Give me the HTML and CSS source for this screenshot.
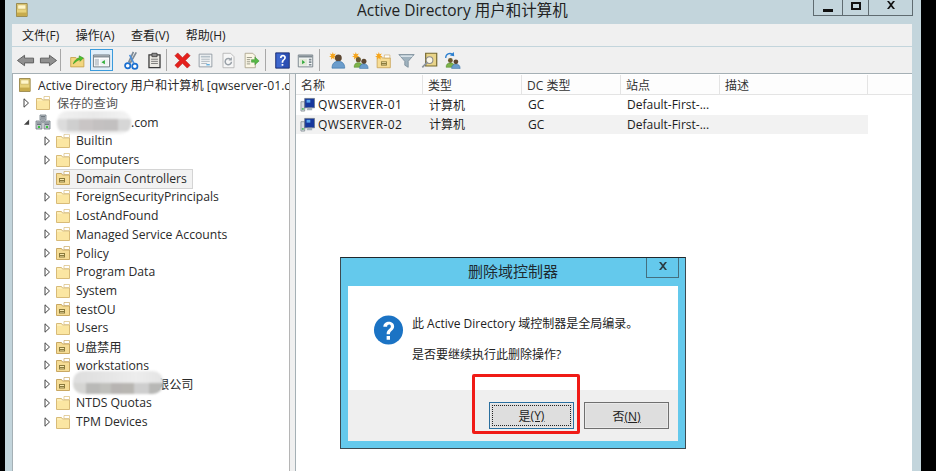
FILE: index.html
```html
<!DOCTYPE html>
<html lang="zh-CN">
<head>
<meta charset="utf-8">
<title>Active Directory 用户和计算机</title>
<link rel="stylesheet" href="styles.css">
</head>
<body>
<svg class="defs" aria-hidden="true">
  <symbol id="folder" viewBox="0 0 16 16">
    <path d="M1.5 3.5h5l1 1.5h7v9.5h-13z" fill="#fdeeb8" stroke="#d8bb78"/>
    <path d="M2 6h12v8H2z" fill="#fbe6a2"/>
    <path d="M9 1.5h5.5v3H9z" fill="#fff" stroke="#d8bb78" stroke-width=".7"/>
  </symbol>
  <symbol id="ou" viewBox="0 0 16 16">
    <path d="M1.5 3.5h5l1 1.5h7v9.5h-13z" fill="#f5dc95" stroke="#c9a862"/>
    <path d="M9 1.5h5.5v3H9z" fill="#fff" stroke="#c9a862" stroke-width=".7"/>
    <path d="M4 8h6v4.500H4z" fill="#8a7a3c"/>
    <path d="M5 9h4v1H5zM5 11h4v.6H5z" fill="#f7e7b0"/>
  </symbol>
  <symbol id="root" viewBox="0 0 14 16">
    <path d="M.5.500h12.500v15H.500z" fill="#e8d27a" stroke="#8c7a3a"/>
    <path d="M2 2h9.500v5H2z" fill="#fff6c8" stroke="#b8a050" stroke-width=".6"/>
    <path d="M1 11h12v4H1z" fill="#c7ab4c"/>
  </symbol>
  <symbol id="domain" viewBox="0 0 16 16">
    <path d="M5 1h6v5H5zM1 7h6v8H1zM9 7h6v8H9z" fill="#c0c6cc" stroke="#6f7980" stroke-width=".8"/>
    <path d="M6 2.500h4M6 4h4M2 9h4M2 10.500h4M10 9h4M10 10.500h4" stroke="#59636b" stroke-width=".8"/>
    <path d="M3 12h2v2H3zM11 12h2v2h-2z" fill="#39c23c"/>
    <path d="M7.500 6h1v3h-1z" fill="#6f7980"/>
  </symbol>
  <symbol id="computer" viewBox="0 0 16 16">
    <path d="M1 5h4v10H1z" fill="#d5dbe0" stroke="#7f8a8f" stroke-width=".8"/>
    <path d="M2 12h2v1.500H2z" fill="#3ab54a"/>
    <path d="M5 1.500h10.500v10H5z" fill="#16379c" stroke="#6d7a88" stroke-width=".8"/>
    <path d="M7 3h4v3H7z" fill="#59a7ee"/>
    <path d="M8 11.500h5V14H7z" fill="#a8b2bb"/>
  </symbol>
  <symbol id="x" viewBox="0 0 10 8"><path d="M1 0h2l2 2.500L7 0h2L6 4l3 4H7L5 5.500 3 8H1l3-4z"/></symbol>
  <symbol id="tri" viewBox="0 0 6 10"><path d="M.5.800 5 5 .5 9.200z" fill="#fff" stroke="#444"/></symbol>
  <symbol id="tri-open" viewBox="0 0 8 8"><path d="M7 1v6H1z" fill="#444"/></symbol>

  <symbol id="i-back" viewBox="0 0 20 20"><path d="M1.500 10 9 4.500V7.500h9.500v5H9v3z" fill="#909090" stroke="#5e5e5e"/></symbol>
  <symbol id="i-fwd" viewBox="0 0 20 20"><path d="M18.500 10 11 4.500V7.500H1.500v5H11v3z" fill="#909090" stroke="#5e5e5e"/></symbol>
  <symbol id="i-up" viewBox="0 0 20 20">
    <path d="M2 6.500h6l1 1h8.500v10H2z" fill="#f3d67f" stroke="#c5a04c"/>
    <path d="M5 14c1-4 4-6 7-7V4.500L17 7l-4 4V9c-3 .500-5 2.500-8 5z" fill="#4ec12f" stroke="#2e8a1c" stroke-width=".6"/>
  </symbol>
  <symbol id="i-tree" viewBox="0 0 20 20">
    <path d="M.5 3.500h19v14H.5z" fill="#fff" stroke="#5c6870"/>
    <path d="M1 4h18v2.500H1z" fill="#8a949c"/>
    <path d="M2 8h5v8H2z" fill="#c7ced4"/>
    <path d="M8.500 8h9.500v8H8.500z" fill="#eef1f3"/>
    <path d="M14 9.500v5l-4-2.500z" fill="#2fae3a"/>
  </symbol>
  <symbol id="i-cut" viewBox="0 0 20 20">
    <path d="M12 1 7 12M15 1.500 8.500 13" stroke="#7d8a96" stroke-width="1.800" fill="none"/>
    <circle cx="6" cy="15.500" r="2.800" fill="#fff" stroke="#1a6fd0" stroke-width="1.800"/>
    <circle cx="13.500" cy="16" r="2.800" fill="#fff" stroke="#1a6fd0" stroke-width="1.800"/>
    <path d="M8 4 12.500 13" stroke="#4a8fdc" stroke-width="1.600"/>
  </symbol>
  <symbol id="i-paste" viewBox="0 0 20 20">
    <path d="M3.500 3.500h13v15h-13z" fill="#eceae4" stroke="#3a3a3a" stroke-width="1.500"/>
    <path d="M7 1.500h6v4H7z" fill="#8c8c8c" stroke="#3a3a3a"/>
    <path d="M6 8.500h8M6 11h8M6 13.500h8" stroke="#6a6a6a"/>
  </symbol>
  <symbol id="i-del" viewBox="0 0 20 20"><path d="M2 5 5 2l5 5 5-5 3 3-5 5 5 5-3 3-5-5-5 5-3-3 5-5z" fill="#e5201c" stroke="#b31512" stroke-width=".6"/></symbol>
  <symbol id="i-props" viewBox="0 0 20 20">
    <path d="M2.500 2.500h15v15h-15z" fill="#f2f4f5" stroke="#8a949c"/>
    <path d="M4.500 4.500h11v2h-11z" fill="#b5c0c8"/>
    <path d="M5 8.500h10M5 11h10M5 13.500h7" stroke="#a5b0b8"/>
    <path d="M11 15h4" stroke="#55a9dd" stroke-width="1.500"/>
  </symbol>
  <symbol id="i-refresh" viewBox="0 0 20 20">
    <path d="M3.500 1.500h9l4 4v13h-13z" fill="#f6f6f6" stroke="#b4b4b4"/>
    <path d="M13.500 11.500a3.700 3.700 0 1 1-1-2.700" fill="none" stroke="#9aa1a8" stroke-width="1.800"/>
    <path d="M14 6v4h-4z" fill="#9aa1a8"/>
  </symbol>
  <symbol id="i-export" viewBox="0 0 20 20">
    <path d="M2.500 1.500h9l3 3v14h-12z" fill="#fbf7e6" stroke="#a8a08a"/>
    <path d="M4.500 6.500h6M4.500 9h4M4.500 11.500h4M4.500 14h4" stroke="#8a8a7a"/>
    <path d="M10 9h4V6l5 4.500-5 4.500v-3h-4z" fill="#58b947" stroke="#3b8f2f" stroke-width=".6"/>
  </symbol>
  <symbol id="i-help" viewBox="0 0 20 20">
    <path d="M2 1h16v18H2z" fill="#2c4fb4" stroke="#16296e"/>
    <path d="M3 2h7v16H3z" fill="#3e67cd"/>
    <path d="M7 7c0-5 7-5 7-.500 0 3-3 2.800-3 6H9c0-4 3-3.800 3-5.800 0-2-3-1.800-3 .300zM9 14h2v2.300H9z" fill="#fff"/>
  </symbol>
  <symbol id="i-view" viewBox="0 0 20 20">
    <path d="M1.500 3.500h17v14h-17z" fill="#f2f4f5" stroke="#6d787f"/>
    <path d="M2 4h16v2.500H2z" fill="#7f8a91"/>
    <path d="M3 8h9v8H3z" fill="#e2e8d8"/>
    <path d="M6 9.500v5l3.500-2.500z" fill="#2fa83a"/>
    <path d="M14 8h3v2h-3zM14 11h3v2h-3zM14 14h3v2h-3z" fill="#7f8a91"/>
  </symbol>
  <symbol id="star" viewBox="0 0 10 10"><path d="m5 0 1 3 3-1-2 3 3 1-3 1 .5 3L5 8 2.500 10 3 7 0 6l3-1-2-3 3 1z" fill="#f6a51c"/></symbol>
  <symbol id="i-user" viewBox="0 0 20 20">
    <use href="#star" x="0" y="0" width="9" height="9"/>
    <circle cx="11" cy="7" r="4" fill="#5c4630"/>
    <path d="M3.500 19c0-6 3.500-8 7.500-8s7.500 2 7.500 8z" fill="#6b9dcc" stroke="#356fa5" stroke-width=".7"/>
  </symbol>
  <symbol id="i-group" viewBox="0 0 20 20">
    <use href="#star" x="0" y="0" width="9" height="9"/>
    <circle cx="7.500" cy="9" r="3" fill="#6b5a30"/>
    <path d="M2.500 18c0-4 2-5.500 5-5.500s5 1.500 5 5.500z" fill="#7eb34a" stroke="#4e8a28" stroke-width=".6"/>
    <circle cx="14" cy="11" r="3" fill="#5c4630"/>
    <path d="M9 19.500c0-4 2-5.500 5-5.500s5 1.500 5 5.500z" fill="#6b9dcc" stroke="#356fa5" stroke-width=".6"/>
  </symbol>
  <symbol id="i-ouadd" viewBox="0 0 20 20">
    <path d="M2.500 5.500h5l1 1.500h9.500v11.500h-15.500z" fill="#f7dd95" stroke="#c9a45a"/>
    <path d="M11 3.500h6.500v3.500H11z" fill="#fff" stroke="#c9a45a" stroke-width=".7"/>
    <path d="M7 11h7v5H7z" fill="#8a7a3c"/>
    <path d="M8 12h5v1H8zM8 14h5v.7H8z" fill="#f7e7b0"/>
    <use href="#star" x="0" y="0" width="9" height="9"/>
  </symbol>
  <symbol id="i-filter" viewBox="0 0 20 20">
    <path d="M1 3h18l-7 8v7l-4-2.500V11z" fill="#9fb2be" stroke="#7b8d99"/>
    <path d="M3 4h14v1.800H3z" fill="#dbe4ea"/>
  </symbol>
  <symbol id="i-find" viewBox="0 0 20 20">
    <path d="M5.500 1.500h13v15h-13z" fill="#e9d489" stroke="#75682f" stroke-width="1.400"/>
    <circle cx="10" cy="9.500" r="4" fill="#fff" fill-opacity=".8" stroke="#8c8c8c" stroke-width="1.200"/>
    <path d="m7 12.500-5.500 5.500" stroke="#8c949c" stroke-width="2"/>
  </symbol>
  <symbol id="i-move" viewBox="0 0 20 20">
    <path d="M2 7c0-5 5-6.500 8-4" fill="none" stroke="#2a7fd0" stroke-width="1.500"/>
    <path d="m11.500 0 .5 5-5-1z" fill="#2a7fd0"/>
    <circle cx="7.500" cy="10" r="2.800" fill="#6b5a30"/>
    <path d="M2.500 18c0-4 2-5 5-5s5 1 5 5z" fill="#7eb34a" stroke="#4e8a28" stroke-width=".6"/>
    <circle cx="14" cy="11.500" r="2.800" fill="#5c4630"/>
    <path d="M9 19.500c0-4 2-5 5-5s5 1 5 5z" fill="#6b9dcc" stroke="#356fa5" stroke-width=".6"/>
  </symbol>
</svg>

<div class="screen">
  <div class="window">
    <header class="titlebar">
      <svg class="app-icon"><use href="#root"/></svg>
      <h1 class="title">Active Directory 用户和计算机</h1>
      <div class="winbtns">
        <span class="winbtn min"><i></i></span>
        <span class="winbtn max"><i></i></span>
        <span class="winbtn close"><svg class="x-mark"><use href="#x"/></svg></span>
      </div>
    </header>

    <nav class="menubar">
      <span>文件(F)</span><span>操作(A)</span><span>查看(V)</span><span>帮助(H)</span>
    </nav>

    <div class="toolbar">
      <div class="tgroup g1">
        <svg class="tool big"><use href="#i-back"/></svg>
        <svg class="tool big"><use href="#i-fwd"/></svg>
      </div>
      <div class="tgroup g2">
        <svg class="tool"><use href="#i-up"/></svg>
        <span class="tool-on"><svg class="tool"><use href="#i-tree"/></svg></span>
        <svg class="tool spaced big"><use href="#i-cut"/></svg>
        <svg class="tool"><use href="#i-paste"/></svg>
      </div>
      <div class="tgroup g3">
        <svg class="tool big"><use href="#i-del"/></svg>
        <svg class="tool"><use href="#i-props"/></svg>
        <svg class="tool"><use href="#i-refresh"/></svg>
        <svg class="tool"><use href="#i-export"/></svg>
      </div>
      <div class="tgroup g4">
        <svg class="tool"><use href="#i-help"/></svg>
        <svg class="tool"><use href="#i-view"/></svg>
      </div>
      <div class="tgroup g5">
        <svg class="tool"><use href="#i-user"/></svg>
        <svg class="tool"><use href="#i-group"/></svg>
        <svg class="tool"><use href="#i-ouadd"/></svg>
        <svg class="tool"><use href="#i-filter"/></svg>
        <svg class="tool"><use href="#i-find"/></svg>
        <svg class="tool"><use href="#i-move"/></svg>
      </div>
    </div>

    <main class="panes">
      <section class="tree">
        <div class="row root"><svg class="ico-root"><use href="#root"/></svg><span class="clip">Active Directory 用户和计算机 [qwserver-01.c</span></div>
        <div class="row lvl1"><svg class="arrow"><use href="#tri"/></svg><svg class="ico"><use href="#folder"/></svg><span class="muted">保存的查询</span></div>
        <div class="row lvl1"><svg class="arrow"><use href="#tri-open"/></svg><svg class="ico"><use href="#domain"/></svg><span class="domain-name">.com</span></div>
        <div class="row lvl2"><svg class="arrow"><use href="#tri"/></svg><svg class="ico"><use href="#folder"/></svg><span>Builtin</span></div>
        <div class="row lvl2"><svg class="arrow"><use href="#tri"/></svg><svg class="ico"><use href="#folder"/></svg><span>Computers</span></div>
        <div class="row lvl2 selected"><span class="arrow"></span><svg class="ico"><use href="#ou"/></svg><span>Domain Controllers</span></div>
        <div class="row lvl2"><svg class="arrow"><use href="#tri"/></svg><svg class="ico"><use href="#folder"/></svg><span>ForeignSecurityPrincipals</span></div>
        <div class="row lvl2"><svg class="arrow"><use href="#tri"/></svg><svg class="ico"><use href="#folder"/></svg><span>LostAndFound</span></div>
        <div class="row lvl2"><svg class="arrow"><use href="#tri"/></svg><svg class="ico"><use href="#folder"/></svg><span>Managed Service Accounts</span></div>
        <div class="row lvl2"><svg class="arrow"><use href="#tri"/></svg><svg class="ico"><use href="#ou"/></svg><span>Policy</span></div>
        <div class="row lvl2"><svg class="arrow"><use href="#tri"/></svg><svg class="ico"><use href="#folder"/></svg><span>Program Data</span></div>
        <div class="row lvl2"><svg class="arrow"><use href="#tri"/></svg><svg class="ico"><use href="#folder"/></svg><span>System</span></div>
        <div class="row lvl2"><svg class="arrow"><use href="#tri"/></svg><svg class="ico"><use href="#ou"/></svg><span>testOU</span></div>
        <div class="row lvl2"><svg class="arrow"><use href="#tri"/></svg><svg class="ico"><use href="#folder"/></svg><span>Users</span></div>
        <div class="row lvl2"><svg class="arrow"><use href="#tri"/></svg><svg class="ico"><use href="#ou"/></svg><span>U盘禁用</span></div>
        <div class="row lvl2"><svg class="arrow"><use href="#tri"/></svg><svg class="ico"><use href="#ou"/></svg><span>workstations</span></div>
        <div class="row lvl2"><svg class="arrow"><use href="#tri"/></svg><svg class="ico"><use href="#ou"/></svg><span class="company-name">限公司</span></div>
        <div class="row lvl2"><svg class="arrow"><use href="#tri"/></svg><svg class="ico"><use href="#folder"/></svg><span>NTDS Quotas</span></div>
        <div class="row lvl2"><svg class="arrow"><use href="#tri"/></svg><svg class="ico"><use href="#folder"/></svg><span>TPM Devices</span></div>
      </section>

      <section class="list">
        <div class="list-head">
          <span class="c1">名称</span><span class="c2">类型</span><span class="c3">DC 类型</span><span class="c4">站点</span><span class="c5">描述</span>
        </div>
        <div class="list-row">
          <span class="c1"><svg class="ico-pc"><use href="#computer"/></svg>QWSERVER-01</span><span class="c2">计算机</span><span class="c3">GC</span><span class="c4">Default-First-...</span>
        </div>
        <div class="list-row alt">
          <span class="c1"><svg class="ico-pc"><use href="#computer"/></svg>QWSERVER-02</span><span class="c2">计算机</span><span class="c3">GC</span><span class="c4">Default-First-...</span>
        </div>
      </section>
    </main>
  </div>

  <div class="mosaic m-domain"></div>
  <div class="mosaic m-company"></div>

  <div class="dialog">
    <div class="dlg-title">
      <span class="dlg-caption">删除域控制器</span>
      <span class="dlg-close"><svg class="x-mark dlg-x"><use href="#x"/></svg></span>
    </div>
    <div class="dlg-body">
      <div class="dlg-msg">
        <svg class="dlg-q" viewBox="0 0 32 32"><circle cx="16" cy="16" r="15.500" fill="#1b73c4"/><path d="M10.500 12.500C10.500 5.500 22 5.500 22 12c0 4.500-4.500 4.500-4.500 8.500h-3.500c0-5.500 4.500-5.500 4.500-8.300 0-3-4-2.800-4 .300zM14 22.500h3.600V26.300H14z" fill="#fff"/></svg>
        <div class="dlg-text">
          <p>此 Active Directory 域控制器是全局编录。</p>
          <p>是否要继续执行此删除操作?</p>
        </div>
      </div>
      <div class="dlg-foot">
        <button class="btn default"><span class="focus">是<u>(Y)</u></span></button>
        <button class="btn">否<u>(N)</u></button>
      </div>
    </div>
  </div>
  <div class="redbox"></div>
</div>
</body>
</html>
```

FILE: styles.css
```css
* { box-sizing: border-box; }
html, body { margin: 0; padding: 0; }
body {
  width: 936px;
  height: 471px;
  overflow: hidden;
  background: #000;
  font-family: "Open Sans", "Noto Sans CJK SC", sans-serif;
  font-size: 12px;
  color: #1c1c1c;
}
.defs { position: absolute; width: 0; height: 0; }

.screen { position: relative; width: 936px; height: 471px; background: #000; overflow: hidden; }

.window {
  width: 916px;
  height: 471px;
  margin-left: 5px;
  padding: 0 9px 0 7px;
  background: #c3d5dc;
  display: flex;
  flex-direction: column;
}

/* title bar */
.titlebar { height: 24px; flex: none; display: flex; align-items: flex-start; position: relative; }
.app-icon { width: 12px; height: 14px; margin: 3px 0 0 4px; flex: none; }
.title {
  position: absolute;
  left: 345px;
  top: 0;
  margin: 0;
  font-size: 15.500px;
  line-height: 20px;
  font-weight: 400;
  white-space: nowrap;
  color: #222;
}
.winbtns { margin-left: auto; margin-right: -1px; display: flex; height: 16px; border: 1px solid #5f6b70; border-top: 0; }
.winbtn { display: flex; align-items: center; justify-content: center; height: 15px; border-left: 1px solid #5f6b70; }
.winbtn:first-child { border-left: 0; }
.winbtn.min { width: 28px; }
.winbtn.min i { display: block; width: 10px; height: 3px; background: #111; margin-top: 5px; }
.winbtn.max { width: 26px; }
.winbtn.max i { display: block; width: 10px; height: 8px; border: 2px solid #111; margin-top: -3px; }
.winbtn.close { width: 44px; align-items: flex-start; padding-top: 1px; }
.x-mark { width: 10px; height: 8px; fill: #111; display: block; }

/* menu */
.menubar {
  height: 22px;
  flex: none;
  background: #f0f0f0;
  display: flex;
  align-items: center;
  gap: 16.500px;
  padding-left: 10px;
  color: #222;
}

/* toolbar */
.toolbar {
  height: 27px;
  flex: none;
  margin-top: 1px;
  background: #f0f0f0;
  display: flex;
  align-items: center;
  border-bottom: 1px solid #a5b0b5;
}
.tgroup { display: flex; align-items: center; height: 22px; border-right: 1px solid #a8a8a8; }
.tgroup.g1 { padding-left: 2px; width: 49px; }
.tgroup.g2 { padding-left: 5px; width: 106px; }
.tgroup.g3 { padding-left: 4px; width: 99px; }
.tgroup.g4 { padding-left: 5px; width: 54px; }
.tgroup.g5 { padding-left: 6px; border-right: 0; }
.tool { width: 23px; height: 17px; flex: none; }
.tool.big { height: 19px; }
.tool.spaced { margin-left: 7px; }
.tool-on {
  display: flex;
  align-items: center;
  height: 22px;
  margin-left: 1px;
  background: #e0eef9;
  box-shadow: inset 0 0 0 1px #3a9bdc;
}

/* panes */
.panes { flex: 1; min-height: 0; display: flex; gap: 5px; background: #f0f0f0; }
.tree {
  width: 278px;
  flex: none;
  background: #fff;
  border-left: 1px solid #a5b0b5;
  border-right: 1px solid #b5b5b5;
  padding-top: 1px;
  overflow: hidden;
  font-size: 12.200px;
}
.row { height: 18.730px; display: flex; align-items: center; white-space: nowrap; color: #2a2a2a; position: relative; }
.row.root { padding-left: 6px; height: 19px; }
.clip { overflow: hidden; }
.ico-root { width: 12px; height: 14px; flex: none; margin-right: 7px; }
.row.lvl1 { padding-left: 10px; }
.row.lvl2 { padding-left: 31px; }
.ico { width: 16px; height: 16px; flex: none; margin: 0 5px 0 4px; }
.row.lvl1 .ico { margin: 0 6px 0 5px; }
.arrow { width: 7px; height: 10px; flex: none; display: block; }
.selected::before {
  content: "";
  position: absolute;
  left: 40px;
  top: 0;
  width: 138px;
  height: 18px;
  background: #f2f2f2;
  border: 1px solid #d4d4d4;
}
.selected .ico, .selected span { position: relative; }
.muted { color: #555; }
.domain-name { padding-left: 74px; }
.company-name { padding-left: 81px; }

/* list */
.list { flex: 1; min-width: 0; background: #fff; border-left: 1px solid #a5b0b5; padding-top: 1px; }
.list-head {
  height: 20px;
  display: flex;
  align-items: center;
  background: #fdfdfd;
  border-bottom: 1px solid #e4e4e4;
  color: #333;
}
.list-head span { height: 19px; display: flex; align-items: center; padding-left: 5px; border-right: 1px solid #e4e4e4; flex: none; }
.list-row { height: 19.500px; display: flex; align-items: center; width: 572px; }
.list-row.alt { background: #f2f2f2; }
.list-row span { padding-left: 6px; flex: none; white-space: nowrap; }
.list-row .c1 { display: flex; align-items: center; padding-left: 4px; letter-spacing: .4px; }
.c1 { width: 127px; }
.c2 { width: 99px; }
.c3 { width: 99px; }
.c4 { width: 99px; }
.c5 { width: 148px; }
.ico-pc { width: 15px; height: 15px; margin-right: 3px; flex: none; }

/* redaction mosaics */
.mosaic { position: absolute; filter: blur(1.200px); border-radius: 10px; }
.m-domain {
  left: 57px; top: 111px; width: 74px; height: 23px;
  background:
    linear-gradient(90deg, #dcdcdc 0 14%, #cfcfcf 14% 30%, #c9c5c5 30% 48%, #c4c1c1 48% 64%, #c2c0c0 64% 82%, #d6d6d6 82%) 0 8px / 100% 12px no-repeat,
    linear-gradient(90deg, #f1f1f1, #e9e9e9 50%, #f3f3f3);
}
.m-company {
  left: 73px; top: 371px; width: 90px; height: 23px;
  background:
    linear-gradient(90deg, #d5d5d3 0 14%, #b9b9b7 14% 30%, #c0c0bc 30% 42%, #b7b4b2 42% 54%, #b8b6b2 54% 68%, #cecece 68% 84%, #b8b8b6 84%) 0 12px / 100% 11px no-repeat,
    linear-gradient(90deg, #dedede, #e3e3e3 30%, #ededed 70%, #e4e4e4);
}

/* dialog */
.dialog {
  position: absolute;
  left: 340px;
  top: 257px;
  width: 346px;
  height: 192px;
  background: #64c9ec;
  border: 1px solid #3d4a50;
  border-top-color: #20282c;
  display: flex;
  flex-direction: column;
  padding: 0 7px 7px;
}
.dlg-title { height: 28px; flex: none; display: flex; justify-content: center; position: relative; }
.dlg-caption { font-size: 15px; line-height: 20px; margin-top: 3px; color: #1e2a30; }
.dlg-close {
  position: absolute;
  right: -1px;
  top: 0;
  width: 33px;
  height: 20px;
  border: 1px solid #44707f;
  border-top: 0;
  display: flex;
  justify-content: center;
  padding-top: 4px;
}
.dlg-x { fill: #2b3b42; }
.dlg-body { flex: 1; min-height: 0; background: #fff; display: flex; flex-direction: column; }
.dlg-msg { flex: 1; display: flex; padding: 29px 0 0 25px; }
.dlg-q { width: 31px; height: 30px; flex: none; margin-right: 8px; }
.dlg-text p { margin: 0 0 13px; line-height: 18px; color: #222; }
.dlg-foot {
  height: 51px;
  flex: none;
  background: #efefef;
  display: flex;
  justify-content: flex-end;
  gap: 10px;
  padding: 12px 9px 0 0;
}
.btn {
  width: 85px;
  height: 27px;
  background: #dedede;
  border: 1px solid #6f6f6f;
  outline: 0;
  padding: 0;
  font: inherit;
  color: #222;
  box-shadow: inset 0 0 0 1px #e9e9e9;
}
.btn.default { border-color: #2a6f9f; display: flex; padding: 2px; }
.focus { flex: 1; display: flex; align-items: center; justify-content: center; border: 1px dotted #222; }

.redbox {
  position: absolute;
  left: 472px;
  top: 374px;
  width: 108px;
  height: 60px;
  border: 3px solid #f01b16;
  border-radius: 2px;
}
```
